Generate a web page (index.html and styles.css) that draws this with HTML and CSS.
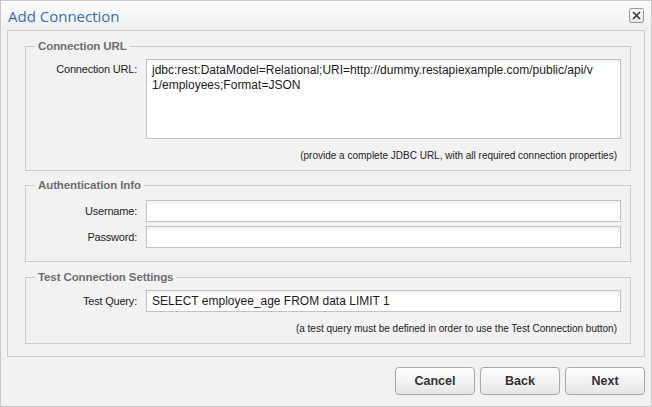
FILE: index.html
```html
<!DOCTYPE html>
<html lang="en">
<head>
<meta charset="utf-8">
<title>Add Connection</title>
<link rel="stylesheet" href="styles.css">
</head>
<body>
<div class="dialog">
  <div class="titlebar">
    <h1 class="title">Add Connection</h1>
    <button class="close" type="button" aria-label="Close">
      <svg width="9" height="9" viewBox="0 0 9 9"><path d="M1 1 L8 8 M8 1 L1 8" stroke="#333" stroke-width="1.6" fill="none"/></svg>
    </button>
  </div>
  <div class="panel">
    <fieldset class="group g-url">
      <legend class="legend">Connection URL</legend>
      <div class="grid">
        <label class="label label-top" for="url">Connection URL:</label>
        <textarea id="url" class="area">jdbc:rest:DataModel=Relational;URI=http://dummy.restapiexample.com/public/api/v
1/employees;Format=JSON</textarea>
      </div>
      <p class="hint">(provide a complete JDBC URL, with all required connection properties)</p>
    </fieldset>
    <fieldset class="group g-auth">
      <legend class="legend">Authentication Info</legend>
      <div class="grid rows">
        <label class="label" for="user">Username:</label>
        <input id="user" class="field" type="text">
        <label class="label" for="pass">Password:</label>
        <input id="pass" class="field" type="password">
      </div>
    </fieldset>
    <fieldset class="group g-test">
      <legend class="legend">Test Connection Settings</legend>
      <div class="grid">
        <label class="label" for="query">Test Query:</label>
        <input id="query" class="field" type="text" value="SELECT employee_age FROM data LIMIT 1">
      </div>
      <p class="hint">(a test query must be defined in order to use the Test Connection button)</p>
    </fieldset>
  </div>
  <div class="actions">
    <button class="btn" type="button">Cancel</button>
    <button class="btn" type="button">Back</button>
    <button class="btn" type="button">Next</button>
  </div>
</div>
</body>
</html>
```

FILE: styles.css
```css
* { box-sizing: border-box; }
html, body { margin: 0; padding: 0; }
body {
  font-family: "Liberation Sans", Arial, sans-serif;
  font-size: 11px;
  color: #222;
  background: #fff;
}
.dialog {
  width: 652px;
  height: 407px;
  border: 1px solid #c9c9c9;
  background: #f2f2f2;
  display: flex;
  flex-direction: column;
}
.titlebar {
  height: 29px;
  flex: none;
  display: flex;
  align-items: center;
  justify-content: space-between;
  padding: 0 7px 0 7px;
  background: linear-gradient(#ffffff, #efefef);
}
.title {
  margin: 0;
  font-family: "Open Sans", "Liberation Sans", sans-serif;
  font-weight: 400;
  font-size: 15px;
  color: #2d6fbd;
  line-height: 20px;
  margin-top: 1px;
}
.close {
  width: 15px;
  height: 15px;
  padding: 0;
  margin-top: -1px;
  border: 1px solid #9a9a9a;
  border-radius: 2px;
  background: linear-gradient(#ffffff, #e4e4e4);
  display: flex;
  align-items: center;
  justify-content: center;
}
.close svg { display: block; }
.panel {
  flex: none;
  height: 327px;
  margin: 0 6px;
  border: 1px solid #cccccc;
  padding: 9px 13px 10px 17px;
  display: flex;
  flex-direction: column;
}
.group {
  margin: 0;
  padding: 0 0 8px 0;
  border: 1px solid #cccccc;
  min-width: 0;
}
.g-auth { margin-top: 8px; padding-bottom: 13px; }
.g-test { margin-top: 9px; }
.legend {
  margin-left: 9px;
  padding: 0 3px;
  font-weight: bold;
  font-size: 11.5px;
  line-height: 13px;
  color: #6e6e6e;
  letter-spacing: -0.1px;
}
.grid {
  display: grid;
  grid-template-columns: 111px 1fr;
  column-gap: 9px;
  padding: 6px 9px 0 0;
  align-items: center;
}
.rows { padding-top: 8px; row-gap: 4px; }
.label { text-align: right; font-size: 11px; letter-spacing: -0.2px; color: #1e1e1e; }
.label-top { align-self: start; padding-top: 4px; }
.area, .field {
  font-family: "Liberation Sans", Arial, sans-serif;
  font-size: 12px;
  color: #1a1a1a;
  border: 1px solid #c2c2c2;
  background: linear-gradient(#f3f3f3, #ffffff 5px);
  margin: 0;
  outline: none;
}
.area {
  display: block;
  width: 100%;
  height: 80px;
  padding: 3px 5px;
  line-height: 15px;
  resize: none;
  overflow: hidden;
  word-break: break-all;
}
.field {
  display: block;
  width: 100%;
  height: 22px;
  padding: 0 5px;
}
.hint {
  margin: 11px 13px 0 0;
  text-align: right;
  font-size: 10px;
  line-height: 12px;
}
.actions {
  display: flex;
  justify-content: flex-end;
  gap: 5px;
  padding: 10px 6px 0 0;
}
.btn {
  width: 80px;
  height: 28px;
  border: 1px solid #a9a9a9;
  border-radius: 4px;
  background: linear-gradient(#ffffff, #e6e6e6);
  font-family: "Liberation Sans", Arial, sans-serif;
  font-weight: bold;
  font-size: 12.5px;
  color: #333;
  padding: 0;
}
```
